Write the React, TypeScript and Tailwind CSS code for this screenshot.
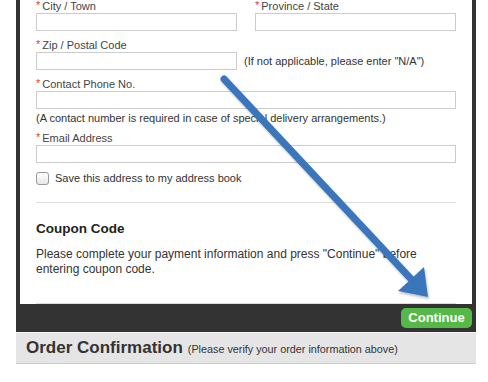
import React from "react"

function Label(props:{text:string}){
  return (
    <div className="flex items-start h-[13px] leading-[13px] text-[11px] text-[#444]">
      <span className="text-[#e53935] text-[11px] leading-[10px] mr-[2px]">*</span>
      <span>{props.text}</span>
    </div>
  )
}

function Input(props:{className?:string}){
  return <div className={"h-[18px] border border-[#ccc] bg-white " + (props.className || "")}></div>
}

function Arrow(){
  return (
    <svg className="absolute left-0 top-0 pointer-events-none" width="488" height="382" viewBox="0 0 488 382">
      <defs>
        <filter id="sh" x="-20%" y="-20%" width="140%" height="140%">
          <feDropShadow dx="1" dy="2" stdDeviation="1.2" floodColor="#000" floodOpacity="0.25"/>
        </filter>
      </defs>
      <g filter="url(#sh)">
        <line x1="224" y1="79" x2="412" y2="280" stroke="#3a76bd" strokeWidth="7" strokeLinecap="round"/>
        <polygon points="398,291 424,267 428,297" fill="#3a76bd"/>
      </g>
    </svg>
  )
}

export default function App(){
  return (
    <div className="relative w-[488px] h-[382px] bg-white overflow-hidden" style={{fontFamily:"'Liberation Sans', Arial, sans-serif"}}>
      <div className="ml-4 w-[460px]">
        <div className="bg-[#333] px-1">
          <div className="bg-white pl-4 pr-4">
            <div className="border-b border-[#ddd] pb-[26px]">
              <div className="grid grid-cols-2 gap-[18px]">
                <div>
                  <Label text="City / Town"/>
                  <Input/>
                </div>
                <div>
                  <Label text="Province / State"/>
                  <Input/>
                </div>
              </div>
              <div className="mt-2">
                <Label text="Zip / Postal Code"/>
                <div className="flex items-center">
                  <Input className="w-[201px]"/>
                  <span className="ml-[7px] text-[11px] text-[#333]">(If not applicable, please enter "N/A")</span>
                </div>
              </div>
              <div className="mt-2">
                <Label text="Contact Phone No."/>
                <Input/>
                <div className="mt-[1px] leading-[16px] text-[11px] text-[#333]">(A contact number is required in case of special delivery arrangements.)</div>
              </div>
              <div className="mt-[6px]">
                <Label text="Email Address"/>
                <Input/>
              </div>
              <label className="mt-[7px] flex items-center gap-[6px] text-[11px] text-[#333]">
                <span className="w-[13px] h-[13px] rounded-[3px] border border-[#999] bg-gradient-to-b from-white to-[#e8e8e8]"></span>
                <span>Save this address to my address book</span>
              </label>
              <div className="mt-[15px] border-t border-[#ddd]"></div>
              <div className="mt-[18px] text-[13.5px] leading-[16px] font-bold text-[#222]">Coupon Code</div>
              <p className="mt-[10px] text-[12px] leading-[15px] text-[#333]">
                Please complete your payment information and press "Continue" before<br/>entering coupon code.
              </p>
            </div>
          </div>
          <div className="h-7 flex items-center justify-end">
            <button className="h-5 w-[71px] rounded-[5px] bg-[#56b947] text-white text-[13px] font-bold leading-5">Continue</button>
          </div>
        </div>
        <div className="border-t border-[#f4f4f4] border-b border-b-[#ccc] bg-[#e5e5e5] h-[32px] flex items-center pl-[10px]">
          <span className="text-[17px] font-bold text-[#333]">Order Confirmation</span>
          <span className="ml-[5px] text-[10.8px] text-[#333] mt-[3px]">(Please verify your order information above)</span>
        </div>
      </div>
      <Arrow/>
    </div>
  )
}
